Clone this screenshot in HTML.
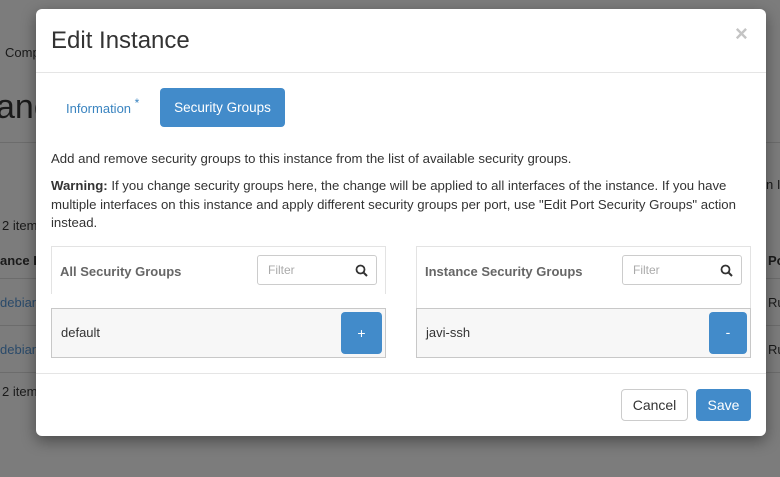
<!DOCTYPE html>
<html><head><style>
body{margin:0;width:780px;height:477px;background:#7c7c7c;font-family:"Liberation Sans",sans-serif;position:relative;overflow:hidden;color:#333}
.bg{position:absolute;color:#1a1a1a;font-size:13px;white-space:nowrap}
.hl{position:absolute;height:1px;background:#6c6c6c}
.modal{position:absolute;left:36px;top:9px;width:730px;height:427px;background:#fff;border-radius:6px;box-shadow:0 5px 15px rgba(0,0,0,.4)}
.a{position:absolute;white-space:nowrap}
.btn{position:absolute;border-radius:4px;font-size:14px;text-align:center;box-sizing:border-box}
.blue{background:#428bca;color:#fff}
.filter{position:absolute;width:120px;height:30px;border:1px solid #ccc;border-radius:3px;box-sizing:border-box;font-size:12px;color:#aaa;padding:7px 10px}
.filter svg{position:absolute;right:8px;top:8px}
.ph{font-weight:bold;color:#666;font-size:13px}
</style></head><body>
<div class="bg" style="left:5px;top:45px">Comp</div>
<div class="bg" style="left:-4px;top:88px;font-size:34px">anc</div>
<div class="hl" style="left:0;top:142px;width:780px"></div>
<div class="bg" style="left:2px;top:218px">2 items</div>
<div class="bg" style="left:0;top:253px;font-weight:bold">ance I</div>
<div class="hl" style="left:0;top:278px;width:780px"></div>
<div class="bg" style="left:0;top:295px;color:#2a4a6a">debian</div>
<div class="hl" style="left:0;top:325px;width:780px"></div>
<div class="bg" style="left:0;top:342px;color:#2a4a6a">debian</div>
<div class="hl" style="left:0;top:372px;width:780px"></div>
<div class="bg" style="left:2px;top:384px">2 items</div>
<div class="bg" style="left:766px;top:177px">n In</div>
<div class="bg" style="left:768px;top:253px;font-weight:bold">Po</div>
<div class="bg" style="left:768px;top:295px">Ru</div>
<div class="bg" style="left:768px;top:342px">Ru</div>

<div class="modal">
 <div class="a" style="left:15px;top:18px;font-size:24px;color:#333">Edit Instance</div>
 <div class="a" style="left:699px;top:12px;font-size:22px;font-weight:bold;color:#c4c4c4">×</div>
 <div class="a" style="left:0;top:63px;width:730px;height:1px;background:#e5e5e5"></div>
 <div class="a" style="left:30px;top:92px;font-size:13px;color:#3a84c0">Information <span style="font-size:12px;position:relative;top:-6px">*</span></div>
 <div class="btn blue" style="left:124px;top:79px;width:125px;height:39px;line-height:39px;font-size:13.5px">Security Groups</div>
 <div class="a" style="left:15px;top:142px;font-size:13.2px">Add and remove security groups to this instance from the list of available security groups.</div>
 <div class="a" style="left:15px;top:168px;font-size:13.2px;line-height:18.5px;width:700px;white-space:normal"><b>Warning:</b> If you change security groups here, the change will be applied to all interfaces of the instance. If you have<br>multiple interfaces on this instance and apply different security groups per port, use "Edit Port Security Groups" action<br>instead.</div>

 <div class="a" style="left:15px;top:237px;width:333px;height:47px;border:1px solid #e3e3e3;border-bottom:none"></div>
 <div class="a ph" style="left:24px;top:255px">All Security Groups</div>
 <div class="filter" style="left:221px;top:246px">Filter<svg width="13" height="13" viewBox="0 0 13 13"><circle cx="5.5" cy="5.5" r="4" fill="none" stroke="#333" stroke-width="1.8"/><path d="M8.5 8.5L12 12" stroke="#333" stroke-width="2"/></svg></div>
 <div class="a" style="left:15px;top:299px;width:333px;height:48px;border:1px solid #c8c8c8;background:#f7f7f7"></div>
 <div class="a" style="left:25px;top:316px;font-size:13px">default</div>
 <div class="btn blue" style="left:305px;top:303px;width:41px;height:42px;line-height:42px">+</div>

 <div class="a" style="left:380px;top:237px;width:333px;height:61px;border:1px solid #e3e3e3"></div>
 <div class="a ph" style="left:389px;top:255px">Instance Security Groups</div>
 <div class="filter" style="left:586px;top:246px">Filter<svg width="13" height="13" viewBox="0 0 13 13"><circle cx="5.5" cy="5.5" r="4" fill="none" stroke="#333" stroke-width="1.8"/><path d="M8.5 8.5L12 12" stroke="#333" stroke-width="2"/></svg></div>
 <div class="a" style="left:380px;top:299px;width:333px;height:48px;border:1px solid #c8c8c8;background:#f7f7f7"></div>
 <div class="a" style="left:390px;top:316px;font-size:13px">javi-ssh</div>
 <div class="btn blue" style="left:673px;top:303px;width:38px;height:42px;line-height:40px">-</div>

 <div class="a" style="left:0;top:364px;width:730px;height:1px;background:#e5e5e5"></div>
 <div class="btn" style="left:585px;top:380px;width:67px;height:32px;line-height:30px;border:1px solid #ccc;color:#333">Cancel</div>
 <div class="btn blue" style="left:660px;top:380px;width:55px;height:32px;line-height:32px">Save</div>
</div>
</body></html>
